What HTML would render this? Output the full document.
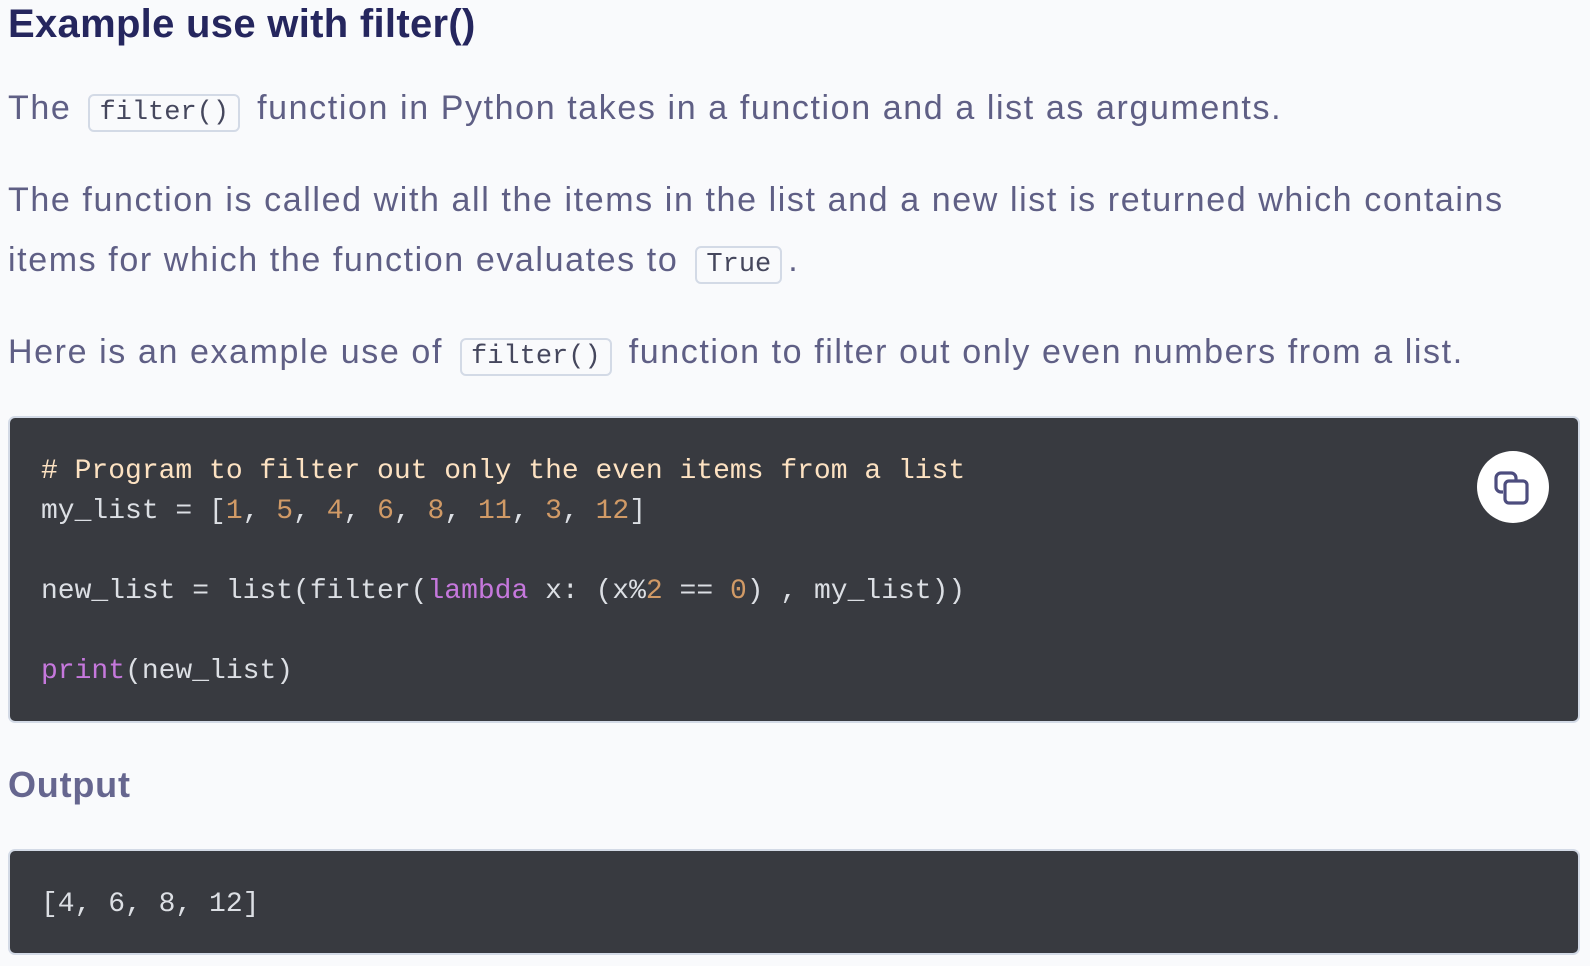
<!DOCTYPE html>
<html><head><style>
body{margin:0;background:#f9fafc;width:1590px;height:966px;overflow:hidden;font-family:"Liberation Sans",sans-serif;}
h2{position:absolute;left:8px;top:0;margin:0;font-size:40px;line-height:48px;color:#25265e;font-weight:bold;letter-spacing:0.3px}
.p{position:absolute;left:8px;font-size:34px;color:#5f5f85;line-height:60px;white-space:nowrap;letter-spacing:1.6px}
code{font-family:"Liberation Mono",monospace;font-size:27px;letter-spacing:0;border:2px solid #d3dae6;border-radius:6px;padding:2px 9px;background:#f9fafc;color:#45475d;margin:0 6px}
.blk{position:absolute;left:8px;width:1572px;background:#383a40;border:2px solid #d3dae6;border-radius:7px;box-sizing:border-box}
pre{margin:0;font-family:"Liberation Mono",monospace;font-size:28px;line-height:40px;color:#dcdfe4;position:absolute;left:31px}
.c{color:#fde2c2}.n{color:#d19a66}.k{color:#c678dd}
h3{position:absolute;left:8px;top:760px;margin:0;font-size:36px;color:#66668f;font-weight:bold;line-height:50px;letter-spacing:0.8px}
</style></head><body>
<h2>Example use with filter()</h2>
<div class="p" style="top:78px">The <code>filter()</code> function in Python takes in a function and a list as arguments.</div>
<div class="p" style="top:170px">The function is called with all the items in the list and a new list is returned which contains</div>
<div class="p" style="top:230px">items for which the function evaluates to <code>True</code>.</div>
<div class="p" style="top:322px">Here is an example use of <code>filter()</code> function to filter out only even numbers from a list.</div>
<div class="blk" style="top:416px;height:307px">
<pre style="top:34px"><span class="c"># Program to filter out only the even items from a list</span>
my_list = [<span class="n">1</span>, <span class="n">5</span>, <span class="n">4</span>, <span class="n">6</span>, <span class="n">8</span>, <span class="n">11</span>, <span class="n">3</span>, <span class="n">12</span>]

new_list = list(filter(<span class="k">lambda</span> x: (x%<span class="n">2</span> == <span class="n">0</span>) , my_list))

<span class="k">print</span>(new_list)</pre>
<div style="position:absolute;left:1467px;top:33px;width:72px;height:72px;border-radius:50%;background:#fff">
<svg width="72" height="72" viewBox="0 0 72 72"><g fill="none" stroke="#4d4d7e" stroke-width="3.2"><path d="M19 36v-9a5 5 0 0 1 5-5h10a5 5 0 0 1 5 5v2"/><path d="M19 36a5 5 0 0 0 5 5h2"/><rect x="28" y="30" width="22" height="22" rx="4"/></g></svg></div>
</div>
<h3>Output</h3>
<div class="blk" style="top:849px;height:106px">
<pre style="top:34px">[4, 6, 8, 12]</pre>
</div>
</body></html>
